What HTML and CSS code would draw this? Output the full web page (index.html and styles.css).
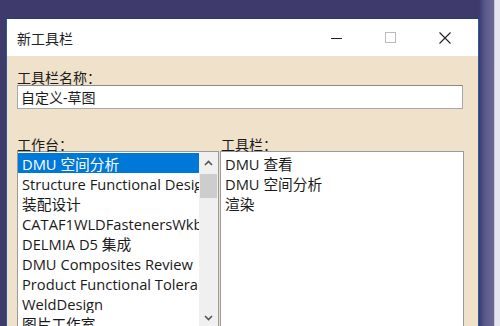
FILE: index.html
```html
<!DOCTYPE html>
<html lang="zh-CN">
<head>
    <meta charset="UTF-8">
    <title>新工具栏</title>
    <link rel="stylesheet" href="styles.css">
</head>
<body>

<div class="desktop">
    <div class="window">
        <div class="titlebar">
            <span class="title">新工具栏</span>
            <div class="controls">
                <span class="ctl ctl-min"><svg width="12" height="12" viewBox="0 0 12 12"><line x1="0" y1="6.5" x2="11" y2="6.5" stroke="#222" stroke-width="1"/></svg></span>
                <span class="ctl ctl-max"><svg width="12" height="12" viewBox="0 0 12 12"><rect x="0.5" y="0.5" width="10" height="10" fill="none" stroke="#bbb" stroke-width="1"/></svg></span>
                <span class="ctl ctl-close"><svg width="12" height="12" viewBox="0 0 12 12"><path d="M0.5 0.5 L11.5 11.5 M11.5 0.5 L0.5 11.5" stroke="#222" stroke-width="1.1"/></svg></span>
            </div>
        </div>

        <div class="panel">
            <label class="field-label" for="toolbarName">工具栏名称：</label>
            <input type="text" id="toolbarName" class="name-input" value="自定义-草图">

            <div class="lists">
                <div class="col col-left">
                    <div class="field-label">工作台：</div>
                    <div class="listbox">
                        <ul class="items">
                            <li class="selected">DMU 空间分析</li>
                            <li>Structure Functional Design</li>
                            <li>装配设计</li>
                            <li>CATAF1WLDFastenersWkb</li>
                            <li>DELMIA D5 集成</li>
                            <li>DMU Composites Review</li>
                            <li>Product Functional Tolerancing</li>
                            <li>WeldDesign</li>
                            <li>图片工作室</li>
                        </ul>
                        <div class="scrollbar">
                            <span class="arrow"><svg width="9" height="6" viewBox="0 0 9 6"><path d="M1 5 L4.5 1.5 L8 5" fill="none" stroke="#555" stroke-width="1.6"/></svg></span>
                            <span class="thumb"></span>
                            <span class="track"></span>
                            <span class="arrow"><svg width="9" height="6" viewBox="0 0 9 6"><path d="M1 1 L4.5 4.5 L8 1" fill="none" stroke="#555" stroke-width="1.6"/></svg></span>
                        </div>
                    </div>
                </div>
                <div class="col col-right">
                    <div class="field-label">工具栏：</div>
                    <div class="listbox">
                        <ul class="items">
                            <li>DMU 查看</li>
                            <li>DMU 空间分析</li>
                            <li>渲染</li>
                        </ul>
                    </div>
                </div>
            </div>
        </div>
    </div>
    <div class="side-strip"></div>
    <div class="edge-strip"></div>
</div>

</body>
</html>
```

FILE: styles.css
```css
body {
    margin: 0;
    padding: 0;
    overflow: hidden;
    background-color: #3e3a6c;
    font-family: "Open Sans", "Noto Sans CJK SC", sans-serif;
    font-size: 14px;
    color: #1a1a1a;
}
.desktop {
    display: flex;
    align-items: flex-start;
    width: 500px;
    height: 326px;
    padding-left: 6px;
    box-sizing: border-box;
    overflow: hidden;
}
.window {
    margin-top: 18px;
    width: 471px;
    height: 330px;
    border: 1px solid #2a5a9a;
    border-top-color: #1d3f78;
    background-color: #f0e2ca;
    display: flex;
    flex-direction: column;
    flex-shrink: 0;
    overflow: hidden;
}
.titlebar {
    height: 37px;
    flex-shrink: 0;
    background-color: #ffffff;
    display: flex;
    align-items: center;
    justify-content: space-between;
    padding-left: 10px;
}
.title {
    font-family: "Noto Sans CJK SC", sans-serif;
    font-size: 14px;
    color: #222;
}
.controls {
    display: flex;
    height: 100%;
}
.ctl {
    width: 50px;
    display: flex;
    align-items: center;
    justify-content: center;
}
.ctl-min {
    margin-right: 4px;
}
.ctl-close {
    width: 46px;
    margin-left: 6px;
    margin-right: 10px;
}
.panel {
    flex-shrink: 0;
    padding: 10px 10px 0 10px;
    display: flex;
    flex-direction: column;
}
.field-label {
    font-family: "Noto Sans CJK SC", sans-serif;
    font-size: 14px;
    line-height: 14px;
    padding-top: 4px;
    color: #1a1a1a;
    display: block;
}
.name-input {
    margin: 1px 0 0 0;
    width: 446px;
    height: 24px;
    box-sizing: border-box;
    border: 1px solid #a8a8a8;
    border-top-color: #8a8a8a;
    background-color: #ffffff;
    padding: 0 3px;
    font-family: "Open Sans", "Noto Sans CJK SC", sans-serif;
    font-size: 14px;
    color: #1a1a1a;
    outline: none;
}
.lists {
    display: flex;
    margin-top: 24px;
}
.col-left {
    width: 202px;
}
.col-right {
    width: 244px;
    margin-left: 1px;
}
.col-right .field-label {
    padding-left: 1px;
}
.listbox {
    height: 200px;
    border: 1px solid #9a9a9a;
    background-color: #ffffff;
    display: flex;
    overflow: hidden;
}
.items {
    list-style: none;
    margin: 0;
    padding: 1px 0 0 0;
    flex: 1;
    overflow: hidden;
}
.items li {
    height: 20px;
    line-height: 22px;
    padding-left: 4px;
    white-space: nowrap;
    overflow: hidden;
    font-size: 14.7px;
}
.items li.selected {
    background-color: #0078d7;
    color: #ffffff;
}
.scrollbar {
    width: 19px;
    flex-shrink: 0;
    background-color: #f0f0f0;
    display: flex;
    flex-direction: column;
    height: 177px;
}
.arrow {
    height: 22px;
    display: flex;
    align-items: center;
    justify-content: center;
}
.thumb {
    height: 24px;
    margin: 0 1px;
    background-color: #cdcdcd;
}
.track {
    flex: 1;
}
.side-strip {
    width: 15px;
    height: 326px;
    flex-shrink: 0;
    background: linear-gradient(to right, #3b3a6f, #5a5a8c 40%, #6b6a95);
}
.edge-strip {
    flex: 1;
    height: 326px;
    background-color: #e6e6ee;
    border-left: 1px solid #c8c8d8;
}
```
